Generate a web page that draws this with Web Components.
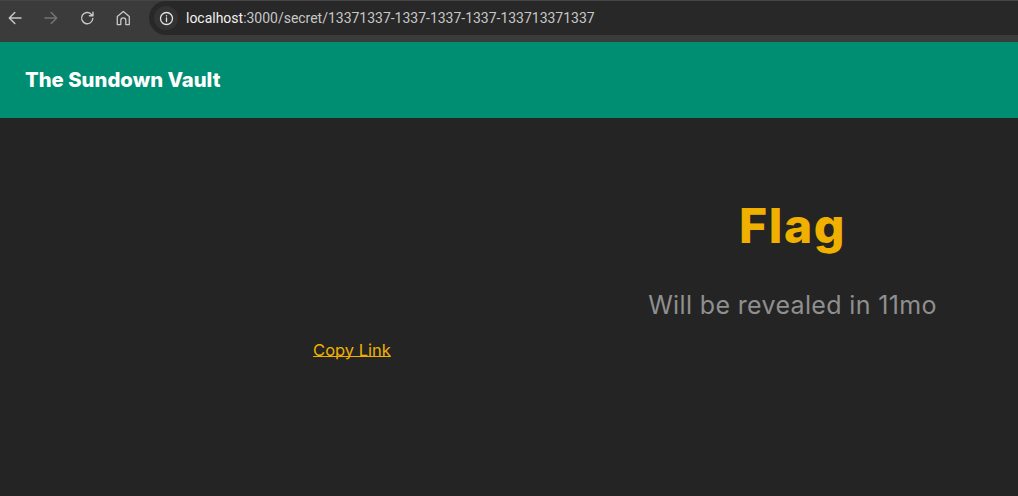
<!DOCTYPE html>
<html><head><meta charset="utf-8"><style>
html,body{margin:0;padding:0;height:100%;background:#242424;overflow:hidden}
body{display:flex;flex-direction:column;height:496px}
</style></head><body>
<browser-bar url-host="localhost" url-rest=":3000/secret/13371337-1337-1337-1337-133713371337"></browser-bar>
<app-header>The Sundown Vault</app-header>
<vault-main></vault-main>
<script>
function def(name,html){customElements.define(name,class extends HTMLElement{constructor(){super();this.attachShadow({mode:'open'}).innerHTML=typeof html==='function'?html(this):html;}});}
def('browser-bar',el=>`<style>
:host{display:flex;align-items:flex-start;height:42px;background:#3b3b3b;box-sizing:border-box;border-top:1px solid #454545;flex:none}
.nav{display:flex;gap:10px;padding-left:2px;height:34px;align-items:center}
.b{width:26px;height:34px;display:flex;align-items:center;justify-content:center}
.omni{flex:1;margin-left:13px;height:34px;background:#282828;border-radius:17px 0 0 17px;display:flex;align-items:center}
.info{width:24px;height:24px;margin-left:5px;border-radius:50%;background:#333;display:flex;align-items:center;justify-content:center}
.url{margin-left:8px;color:#c7c7c7;font:13.970px Roboto,"Liberation Sans",sans-serif;white-space:nowrap}
.url b{font-weight:400;color:#f1f1f1}
svg{display:block;fill:none;stroke-linecap:round;stroke-linejoin:round}
</style>
<div class="nav">
<div class="b"><svg width="16" height="16" viewBox="0 0 16 16" stroke="#c7c7c7" stroke-width="1.500"><path d="M14 8H2.500M7.800 2.500 2.300 8l5.500 5.500"/></svg></div>
<div class="b"><svg width="16" height="16" viewBox="0 0 16 16" stroke="#737373" stroke-width="1.500"><path d="M2 8h11.500M8.200 2.500 13.700 8l-5.500 5.500"/></svg></div>
<div class="b"><svg width="16" height="16" viewBox="0 0 16 16" stroke="#c7c7c7" stroke-width="1.400"><path d="M13.800 8.500A5.600 5.600 0 1 1 12.200 4.200L14 5.800M14 2.200V5.800H10.400"/></svg></div>
<div class="b"><svg width="16" height="16" viewBox="0 0 16 16" stroke="#c7c7c7" stroke-width="1.300"><path d="M2.300 14.600V6.600L8.300 1.500 14.300 6.600V14.600H10.800V10.400A2.500 2.500 0 0 0 5.800 10.400V14.600Z"/></svg></div>
</div>
<div class="omni"><div class="info"><svg width="15" height="15" viewBox="0 0 15 15" stroke="#e3e3e3" stroke-width="1.300"><circle cx="7.500" cy="7.500" r="6"/><path d="M7.500 7v3.500M7.500 4.600v.3"/></svg></div>
<div class="url"><b>${el.getAttribute('url-host')}</b>${el.getAttribute('url-rest')}</div></div>`);
def('app-header',`<style>
:host{display:flex;align-items:center;height:74px;padding-bottom:2px;background:#008e72;padding-left:25px;color:#fff;font:800 20.300px Inter,"Liberation Sans",sans-serif;flex:none}
</style><slot></slot>`);
def('copy-link',`<style>
:host{display:block;text-align:center;font:400 16.500px Inter,"Liberation Sans",sans-serif;color:#f0b000;text-decoration:underline;text-underline-offset:0;text-decoration-skip-ink:none}
</style><slot></slot>`);
def('flag-panel',`<style>
:host{display:flex;flex-direction:column;align-items:center;text-align:center}
h1{margin:0;font:800 48px/58px Inter,"Liberation Sans",sans-serif;letter-spacing:1.600px;color:#f0b000}
p{margin:33px 0 0;font:400 25px/34px Inter,"Liberation Sans",sans-serif;letter-spacing:.35px;color:#8f8f8f}
</style><h1>Flag</h1><p>Will be revealed in 11mo</p>`);
def('vault-main',`<style>
:host{display:grid;grid-template-columns:440px 441px;padding:79px 0 0 132px;flex:1;align-items:start}
.l{padding-top:143px}
</style><div class="l"><copy-link>Copy Link</copy-link></div><flag-panel></flag-panel>`);
</script></body></html>
